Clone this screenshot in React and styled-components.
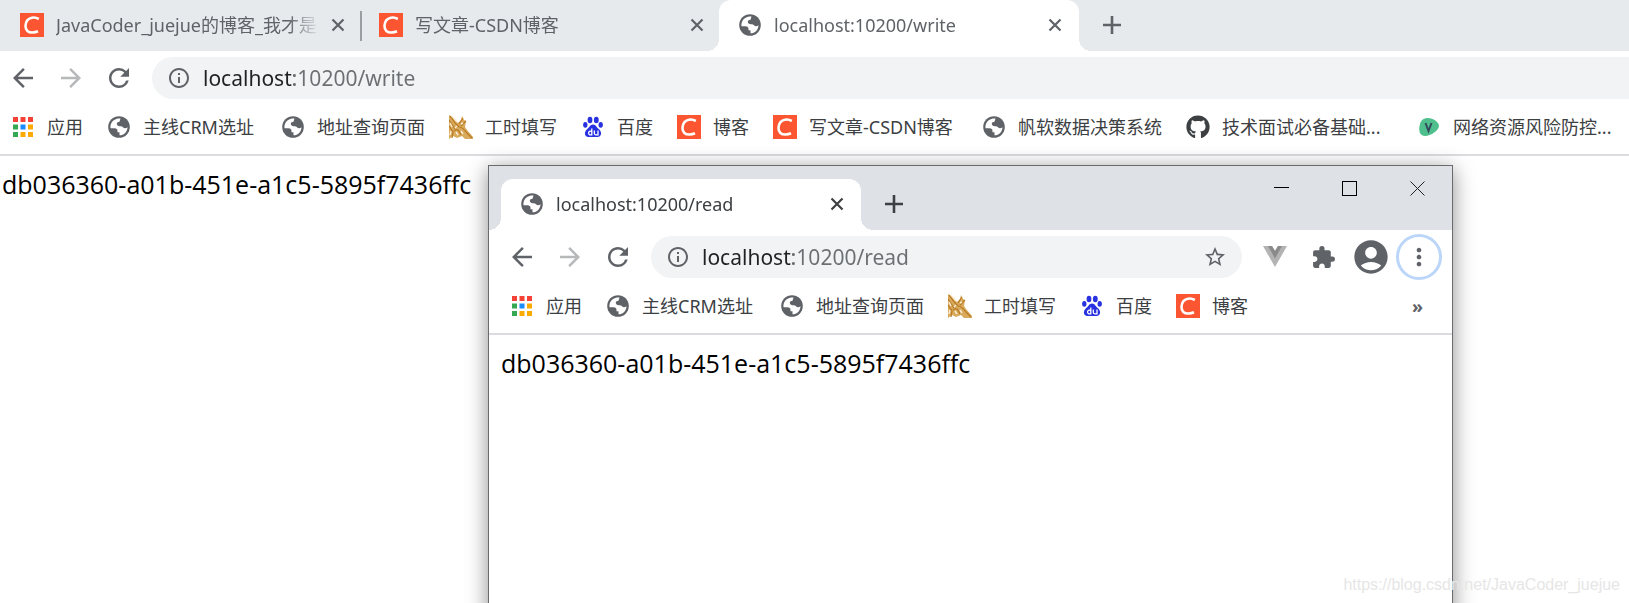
import styled, { createGlobalStyle, css } from "styled-components";
import {
  MdArrowBack,
  MdArrowForward,
  MdRefresh,
  MdInfoOutline,
  MdStarBorder,
  MdExtension,
  MdAccountCircle,
  MdMoreVert,
} from "react-icons/md";
import { FaGithub } from "react-icons/fa";

const GlobalStyle = createGlobalStyle`
  * {
    box-sizing: border-box;
  }
  body {
    margin: 0;
    background: #fff;
    font-family: "Noto Sans", "Noto Sans CJK SC", sans-serif;
    font-size: 18px;
    color: #3c4043;
  }
  button {
    padding: 0;
    border: none;
    background: none;
    color: inherit;
    font: inherit;
  }
`;

const Desktop = styled.div`
  position: relative;
  height: 100vh;
  overflow: hidden;
`;

const TabStrip = styled.div`
  display: flex;
  align-items: flex-end;
  height: ${(props) => (props.$popup ? "64px" : "51px")};
  padding-left: ${(props) => (props.$popup ? "12px" : "1px")};
  background: ${(props) => (props.$popup ? "#dee1e6" : "#e6eaed")};
  color: ${(props) => (props.$popup ? "#3c4043" : "#5f6368")};
`;

const activeTab = css`
  width: 360px;
  padding-right: 12px;
  background: #fff;
  border-radius: 12px 12px 0 0;

  &::before,
  &::after {
    content: "";
    position: absolute;
    bottom: 0;
    width: 12px;
    height: 12px;
  }
  &::before {
    right: 100%;
    background: radial-gradient(circle at 0 0, transparent 12px, #fff 12px);
  }
  &::after {
    left: 100%;
    background: radial-gradient(circle at 100% 0, transparent 12px, #fff 12px);
  }
`;

const TabItem = styled.div`
  position: relative;
  display: flex;
  align-items: center;
  flex: 0 0 auto;
  width: 359px;
  height: 51px;
  padding: 0 10px 2px 19px;
  ${(props) => props.$active && activeTab}
`;

const TabTitle = styled.span`
  flex: 1;
  margin: 0 6px 0 12px;
  overflow: hidden;
  white-space: nowrap;
  line-height: 28px;
  mask-image: linear-gradient(to right, #000 88%, transparent);
`;

const Separator = styled.div`
  align-self: center;
  flex: 0 0 auto;
  width: 2px;
  height: 30px;
  margin-right: -2px;
  background: #9a9ea3;
`;

const IconButton = styled.button`
  display: flex;
  align-items: center;
  justify-content: center;
  flex: 0 0 auto;
  width: ${(props) => props.$width || "24px"};
  height: ${(props) => props.$height || "24px"};
`;

const NewTab = styled(IconButton)`
  margin: 0 0 14px 21px;
`;

const WindowControls = styled.div`
  display: flex;
  align-self: flex-start;
  margin: 0 1px 0 auto;
`;

const Toolbar = styled.div`
  display: flex;
  align-items: center;
  gap: 2px;
  height: 54px;
  padding: ${(props) => (props.$popup ? "0 10px" : "0")};
  color: #5f6368;
`;

const NavButton = styled(IconButton)`
  width: 46px;
  opacity: ${(props) => (props.disabled ? 0.45 : 1)};
`;

const AddressBar = styled.label`
  display: flex;
  align-items: center;
  flex: 1;
  min-width: 0;
  height: 42px;
  margin-left: 8px;
  padding: 0 15px;
  background: #f1f3f4;
  border-radius: ${(props) => (props.$popup ? "21px" : "21px 0 0 21px")};
`;

/* the host is dark, the port and the path are grey */
const AddressInput = styled.input`
  flex: 1;
  min-width: 0;
  height: 32px;
  margin-left: 12px;
  padding: 0;
  border: none;
  outline: none;
  font: inherit;
  font-size: 21px;
  color: #5f6368;
  background: linear-gradient(to right, #202124 91px, #6b6f73 91px);
  background-clip: text;
  -webkit-text-fill-color: transparent;
`;

const Extensions = styled.div`
  display: flex;
  align-items: center;
  margin-left: 7px;
`;

const MenuButton = styled(IconButton)`
  width: 46px;
  height: 46px;
  margin-left: 1px;
  border: 3px solid #bbd6f9;
  border-radius: 50%;
`;

const BookmarkBar = styled.nav`
  display: flex;
  align-items: center;
  gap: 24px;
  height: 51px;
  padding: ${(props) => (props.$popup ? "0 29px 6px 21px" : "0 0 6px 11px")};
  border-bottom: 2px solid #dadce0;
`;

const BookmarkLink = styled.a`
  display: flex;
  align-items: center;
  flex: 0 0 auto;
  gap: 12px;
  color: #3c4043;
  line-height: 28px;
  white-space: nowrap;
  text-decoration: none;
`;

const BookmarkLabel = styled.span`
  min-width: ${(props) => props.$width || "0"};
`;

const Overflow = styled.button`
  height: 28px;
  margin-left: auto;
  font-weight: 700;
  color: #5f6368;
  line-height: 24px;
`;

const Content = styled.main`
  padding: ${(props) => (props.$popup ? "10px 12px" : "10px 2px")};
  font-family: "Open Sans", sans-serif;
  font-size: 25px;
  line-height: 36px;
  color: #000;
`;

const PopupWindow = styled.section`
  position: absolute;
  top: 165px;
  right: 176px;
  bottom: -20px;
  left: 488px;
  background: #fff;
  border: 1px solid #6b6b6e;
  box-shadow: 0 4px 20px rgba(0, 0, 0, 0.45);
`;

const Watermark = styled.div`
  position: absolute;
  right: 9px;
  bottom: 7px;
  font-family: "Liberation Sans", sans-serif;
  font-size: 16px;
  line-height: 22px;
  color: #e6e6e6;
`;

const IconBox = styled.svg`
  display: block;
  flex: 0 0 auto;
`;

const CsdnIcon = () => (
  <IconBox width="24" height="24" viewBox="0 0 24 24">
    <rect width="24" height="24" fill="#fc5531" />
    <path
      d="M18.800 6C16.500 4.700 14 4.200 11.800 4.800C8 5.700 5.700 8.800 5.500 12.800C5.300 17.500 8.300 19.600 12.500 19.500C14.800 19.400 16.500 18.900 18 18.200"
      fill="none"
      stroke="#fff"
      strokeWidth="2.600"
    />
  </IconBox>
);

const AppsIcon = () => {
  const colors = [
    "#f44336", "#f44336", "#f44336",
    "#34a853", "#1a8cff", "#fbab00",
    "#34a853", "#fbab00", "#fbab00",
  ];
  return (
    <IconBox width="24" height="24" viewBox="0 0 24 24">
      {colors.map((color, i) => (
        <rect
          key={i}
          x={2 + (i % 3) * 7.5}
          y={2 + Math.floor(i / 3) * 7.5}
          width="5"
          height="5"
          fill={color}
        />
      ))}
    </IconBox>
  );
};

const GlobeIcon = () => (
  <IconBox width="24" height="24" viewBox="0 0 24 24">
    <circle cx="12" cy="12" r="10.800" fill="#5f6368" />
    <path
      d="M13.500 3.500C9 3 4.800 5.500 3.700 9.800C3.300 11.500 3.400 12.500 3.600 13.300H7.500C9.500 13.300 10.500 14.300 10.500 16V17.300H12.500V20.300C17 20.200 20.500 16.500 20.500 12.200C19 13.800 17 13.600 16 12.300C15.300 11.300 14.500 11.300 12.800 11.300C11 11.300 9.800 10.300 9.800 8.800C9.800 7.300 11 6.800 12.500 6.700Z"
      fill="#fff"
    />
  </IconBox>
);

const AxeIcon = () => (
  <IconBox width="24" height="24" viewBox="0 0 24 24" fill="none">
    <path
      d="M0 0L5 3L9 8L12 5L13 1L15 5L17 6L16 12L18 15L24 22V24H16L13 21L8 23L4 21L0 24Z"
      fill="#d9a95c"
    />
    <path
      d="M1 1L7 9L10 12M0 5L6 14M0 11L4 17L3 23M14 3L10 9M17 6L12 11M10 12C14 12 16 16 19 19M5 16C8 13 10 15 12 20M19 19L23 23"
      stroke="#b67a24"
      strokeWidth="1.200"
    />
    <path
      d="M3 1L8 7M1 8L3 12M7 17L9 20M1 20L2 16M14 8L12 9M12 16L14 19M8 11L6 13"
      stroke="#fbeed8"
      strokeWidth="1.400"
    />
  </IconBox>
);

const BaiduIcon = () => (
  <IconBox width="24" height="24" viewBox="0 0 24 24" fill="#2932e1">
    <ellipse cx="9" cy="5" rx="2.400" ry="3.200" />
    <ellipse cx="15.300" cy="5" rx="2.400" ry="3.200" />
    <ellipse cx="4.300" cy="9.800" rx="2.200" ry="2.900" />
    <ellipse cx="19.700" cy="9.800" rx="2.200" ry="2.900" />
    <path d="M12 9.500C15 9.500 15.500 12.500 18 14.300C21 16.500 21 22 16.500 22H7.500C3 22 3 16.500 6 14.300C8.500 12.500 9 9.500 12 9.500Z" />
    <path
      d="M10.800 13.500V19.800H8.800A1.800 1.900 0 1 1 10.800 16.800M13.300 15.500V18.300Q13.300 19.800 14.800 19.800H17V15.500"
      fill="none"
      stroke="#fff"
      strokeWidth="1.300"
    />
  </IconBox>
);

const LeafIcon = () => (
  <IconBox width="24" height="24" viewBox="0 0 24 24">
    <path
      d="M3 9C4 5 7 3 11 3C16 3 22 7 22 11C22 15 14 21 8 21C3 21 1 16 3 9Z"
      fill="#4fc08d"
    />
    <path d="M8.500 8L11.500 16L14.500 8" fill="none" stroke="#35495e" strokeWidth="2" />
  </IconBox>
);

const VueIcon = () => (
  <IconBox width="24" height="22" viewBox="0 0 24 22">
    <path d="M0 0H9L12 5L15 0H24L12 21Z" fill="#b3b3b3" />
    <path d="M5 0H9L12 5L15 0H19L12 12.500Z" fill="#8a8a8a" />
  </IconBox>
);

const CloseIcon = () => (
  <IconBox width="24" height="24" viewBox="0 0 24 24">
    <path d="M6.500 6.500L17.500 17.500M17.500 6.500L6.500 17.500" stroke="currentColor" strokeWidth="2.200" />
  </IconBox>
);

const PlusIcon = () => (
  <IconBox width="24" height="24" viewBox="0 0 24 24">
    <path d="M12 3V21M3 12H21" stroke="currentColor" strokeWidth="2.600" />
  </IconBox>
);

const MinimizeIcon = () => (
  <IconBox width="15" height="15" viewBox="0 0 15 15">
    <path d="M0 6.500H15" stroke="#000" />
  </IconBox>
);

const MaximizeIcon = () => (
  <IconBox width="15" height="15" viewBox="0 0 15 15">
    <rect x="0.500" y="0.500" width="14" height="14" fill="none" stroke="#000" />
  </IconBox>
);

const CloseWindowIcon = () => (
  <IconBox width="15" height="15" viewBox="0 0 15 15">
    <path d="M0.500 0.500L14.500 14.500M14.500 0.500L0.500 14.500" stroke="#222" />
  </IconBox>
);

const bookmarks = [
  { name: "应用", icon: AppsIcon },
  { name: "主线CRM选址", icon: GlobeIcon, width: "114px" },
  { name: "地址查询页面", icon: GlobeIcon },
  { name: "工时填写", icon: AxeIcon },
  { name: "百度", icon: BaiduIcon },
  { name: "博客", icon: CsdnIcon },
  { name: "写文章-CSDN博客", icon: CsdnIcon, width: "149px" },
  { name: "帆软数据决策系统", icon: GlobeIcon },
  { name: "技术面试必备基础...", icon: FaGithub, width: "171px" },
  { name: "网络资源风险防控...", icon: LeafIcon, width: "171px" },
];

const Tab = ({ title, icon: Icon, active }) => (
  <TabItem role="tab" aria-selected={!!active} $active={active}>
    <Icon />
    <TabTitle>{title}</TabTitle>
    <IconButton aria-label={`关闭 ${title}`}>
      <CloseIcon />
    </IconButton>
  </TabItem>
);

const Navigation = () => (
  <>
    <NavButton aria-label="后退">
      <MdArrowBack size={30} />
    </NavButton>
    <NavButton aria-label="前进" disabled>
      <MdArrowForward size={30} />
    </NavButton>
    <NavButton aria-label="刷新">
      <MdRefresh size={30} />
    </NavButton>
  </>
);

const Bookmarks = ({ items, popup }) => (
  <BookmarkBar $popup={popup}>
    {items.map(({ name, icon: Icon, width }) => (
      <BookmarkLink href="#" key={name}>
        <Icon size={24} />
        <BookmarkLabel $width={width}>{name}</BookmarkLabel>
      </BookmarkLink>
    ))}
    {popup && <Overflow>»</Overflow>}
  </BookmarkBar>
);

const App = () => {
  const session = "db036360-a01b-451e-a1c5-5895f7436ffc";

  return (
    <Desktop>
      <GlobalStyle />
      <TabStrip role="tablist">
        <Tab title="JavaCoder_juejue的博客_我才是" icon={CsdnIcon} />
        <Separator />
        <Tab title="写文章-CSDN博客" icon={CsdnIcon} />
        <Tab title="localhost:10200/write" icon={GlobeIcon} active />
        <NewTab aria-label="新标签页">
          <PlusIcon />
        </NewTab>
      </TabStrip>
      <Toolbar>
        <Navigation />
        <AddressBar>
          <MdInfoOutline size={24} />
          <AddressInput aria-label="地址" defaultValue="localhost:10200/write" />
        </AddressBar>
      </Toolbar>
      <Bookmarks items={bookmarks} />
      <Content>{session}</Content>

      <PopupWindow>
        <TabStrip role="tablist" $popup>
          <Tab title="localhost:10200/read" icon={GlobeIcon} active />
          <NewTab aria-label="新标签页">
            <PlusIcon />
          </NewTab>
          <WindowControls>
            <IconButton aria-label="最小化" $width="68px" $height="45px">
              <MinimizeIcon />
            </IconButton>
            <IconButton aria-label="最大化" $width="68px" $height="45px">
              <MaximizeIcon />
            </IconButton>
            <IconButton aria-label="关闭" $width="68px" $height="45px">
              <CloseWindowIcon />
            </IconButton>
          </WindowControls>
        </TabStrip>
        <Toolbar $popup>
          <Navigation />
          <AddressBar $popup>
            <MdInfoOutline size={24} />
            <AddressInput aria-label="地址" defaultValue="localhost:10200/read" />
            <IconButton aria-label="收藏">
              <MdStarBorder size={26} />
            </IconButton>
          </AddressBar>
          <Extensions>
            <IconButton aria-label="Vue" $width="48px">
              <VueIcon />
            </IconButton>
            <IconButton aria-label="扩展程序" $width="48px">
              <MdExtension size={25} />
            </IconButton>
            <IconButton aria-label="账户" $width="48px">
              <MdAccountCircle size={40} />
            </IconButton>
            <MenuButton aria-label="菜单">
              <MdMoreVert size={28} />
            </MenuButton>
          </Extensions>
        </Toolbar>
        <Bookmarks items={bookmarks.slice(0, 6)} popup />
        <Content $popup>{session}</Content>
      </PopupWindow>
      <Watermark>https://blog.csdn.net/JavaCoder_juejue</Watermark>
    </Desktop>
  );
};

export default App;
